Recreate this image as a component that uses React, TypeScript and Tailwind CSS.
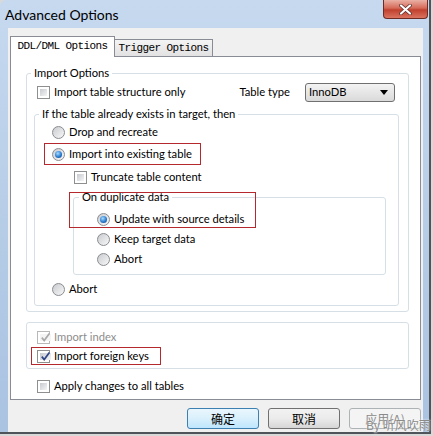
import React from "react";

const label = "font-['Lato','Noto_Sans',sans-serif] text-[11.2px] text-black";

function Radio({ checked }: { checked?: boolean }) {
  return (
    <span className="w-[13px] h-[13px] rounded-full border border-[#8a8c90] bg-[linear-gradient(135deg,#c9cbcf,#f8f8f8)] flex items-center justify-center shrink-0">
      {checked && (
        <span className="w-[7px] h-[7px] rounded-full bg-[radial-gradient(circle_at_40%_35%,#a8dcff,#2a7cd0_55%,#0f3f7a)]" />
      )}
    </span>
  );
}

function Check({ checked, disabled }: { checked?: boolean; disabled?: boolean }) {
  return (
    <span
      className={`w-[13px] h-[13px] border bg-white p-[2px] shrink-0 flex ${
        disabled ? "border-[#b8b8b8]" : "border-[#8e8f8f]"
      }`}
    >
      <span
        className={`flex-1 flex items-center justify-center ${
          disabled ? "bg-[#f4f4f4]" : "bg-[linear-gradient(135deg,#c7cad0,#f5f5f5)]"
        }`}
      >
        {checked && (
          <svg width="11" height="11" viewBox="0 0 11 11" className="shrink-0">
            <path
              d="M1.8 5.6 L4.2 8.6 L9.4 1.6"
              fill="none"
              stroke={disabled ? "#a9a9a9" : "#2f4588"}
              strokeWidth="1.7"
            />
          </svg>
        )}
      </span>
    </span>
  );
}

function Row({ children, className = "" }: { children: React.ReactNode; className?: string }) {
  return <div className={`flex items-center h-[20px] gap-[4px] ${className}`}>{children}</div>;
}

export default function App() {
  return (
    <div className="w-[433px] h-[436px] bg-[#d9d9d9] relative overflow-hidden">
      <div className="w-[431px] h-[434px] border-r-2 border-b-2 border-[#4f545b] bg-[linear-gradient(180deg,#c6d9ef,#b4cbe6_60%,#aac3e1)] flex flex-col rounded-tl-[6px]">
        {/* title bar */}
        <div className="h-[28px] flex items-start justify-between shrink-0">
          <span className="pl-[5px] pt-[5px] font-['Lato','Noto_Sans',sans-serif] text-[14px] leading-[20px] text-black">
            Advanced Options
          </span>
          <div className="mr-[1px] w-[45px] h-[19px] rounded-b-[4px] border border-t-0 border-[#6e2b24] bg-[linear-gradient(180deg,#eab1a6,#d56a58_45%,#c0402e_55%,#d9735f)] flex items-center justify-center">
            <svg width="13" height="11" viewBox="0 0 13 11">
              <path d="M2 1.5 L11 9.5 M11 1.5 L2 9.5" stroke="#5b2a25" strokeWidth="3.6" strokeLinecap="round" />
              <path d="M2 1.5 L11 9.5 M11 1.5 L2 9.5" stroke="#ffffff" strokeWidth="2.2" strokeLinecap="round" />
            </svg>
          </div>
        </div>

        {/* client area */}
        <div className="ml-[8px] mr-[6px] flex-1 bg-[#f0f0f0] pt-[8px] px-[2px] flex flex-col">
          {/* tabs */}
          <div className="relative z-10 h-[21px] -mb-px flex items-start font-['Liberation_Mono',monospace] text-[11px] tracking-[-0.6px] text-black">
            <div className="w-[105px] h-[21px] border border-b-0 border-[#898c95] bg-white flex items-center justify-center pb-[1px]">
              DDL/DML Options
            </div>
            <div className="mt-[3px] w-[98px] h-[17px] border border-l-0 border-b-0 border-[#898c95] bg-[linear-gradient(180deg,#f4f4f4,#e2e2e2)] flex items-center justify-center">
              Trigger Options
            </div>
          </div>

          {/* panel */}
          <div className={`h-[344px] border border-[#898c95] bg-white pt-[9px] ${label}`}>
            <fieldset className="ml-[15px] mr-[11px] border border-[#d5dfe5] rounded-[3px]">
              <legend className="ml-[4px] px-[3px] leading-[14px]">Import Options</legend>
              <Row className="mt-[2px] pl-[10px] pr-[13px]">
                <Check />
                <span>Import table structure only</span>
                <div className="ml-auto flex items-center gap-[15px]">
                  <span>Table type</span>
                  <div className="w-[90px] h-[19px] rounded-[3px] border border-[#707070] bg-[linear-gradient(180deg,#f3f3f3,#e6e6e6_50%,#dadada)] flex items-center justify-between pl-[3px] pr-[6px]">
                    <span>InnoDB</span>
                    <svg width="8" height="5" viewBox="0 0 8 5">
                      <path d="M0 0 H8 L4 5 Z" fill="#000" />
                    </svg>
                  </div>
                </div>
              </Row>

              <fieldset className="mt-[5px] mb-[5px] ml-[7px] mr-[9px] border border-[#d5dfe5] rounded-[3px] pb-[6px]">
                <legend className="ml-[4px] px-[3px] leading-[14px]">
                  If the table already exists in target, then
                </legend>
                <Row className="mt-[1px] pl-[17px]">
                  <Radio />
                  <span>Drop and recreate</span>
                </Row>
                <div className="mt-[1px] ml-[9px] w-[157px] h-[22px] border border-[#b5282d] flex items-center gap-[4px] pl-[7px]">
                  <Radio checked />
                  <span>Import into existing table</span>
                </div>
                <Row className="mt-[2px] pl-[39px]">
                  <Check />
                  <span>Truncate table content</span>
                </Row>

                <div className="relative mt-[3px] ml-[38px] mr-[12px]">
                  <fieldset className="border border-[#d5dfe5] rounded-[3px] pt-[5px] pb-[5px]">
                    <legend className="ml-[5px] px-[3px] leading-[14px]">On duplicate data</legend>
                    <Row className="pl-[23px]">
                      <Radio checked />
                      <span>Update with source details</span>
                    </Row>
                    <Row className="pl-[23px]">
                      <Radio />
                      <span>Keep target data</span>
                    </Row>
                    <Row className="pl-[23px]">
                      <Radio />
                      <span>Abort</span>
                    </Row>
                  </fieldset>
                  <div className="absolute left-[-4px] top-[2px] w-[187px] h-[36px] border border-[#b5282d]" />
                </div>

                <Row className="mt-[4px] pl-[17px]">
                  <Radio />
                  <span>Abort</span>
                </Row>
              </fieldset>
            </fieldset>

            <div className="mt-[10px] ml-[15px] mr-[11px] border border-[#d5dfe5] rounded-[3px] pt-[5px] pb-[3px]">
              <div className="flex items-center h-[18px] gap-[4px] pl-[10px] text-[#8d8d8d]">
                <Check checked disabled />
                <span>Import index</span>
              </div>
              <div className="mt-[1px] ml-[4px] w-[130px] h-[18px] border border-[#b5282d] flex items-center gap-[4px] pl-[5px]">
                <Check checked />
                <span>Import foreign keys</span>
              </div>
            </div>

            <Row className="mt-[7px] pl-[26px]">
              <Check />
              <span>Apply changes to all tables</span>
            </Row>
          </div>

          {/* buttons */}
          <div className="mt-[8px] flex justify-end gap-[9px] font-['Noto_Sans_CJK_SC',sans-serif] text-[12px]">
            <button className="w-[72px] h-[21px] rounded-[3px] border border-[#3c7fb1] bg-[linear-gradient(180deg,#eaf6fd,#d9f0fc_50%,#bee6fd)] text-black leading-none">
              确定
            </button>
            <button className="w-[72px] h-[21px] rounded-[3px] border border-[#707070] bg-[linear-gradient(180deg,#f2f2f2,#ebebeb_50%,#d6d6d6)] text-black leading-none">
              取消
            </button>
            <button className="w-[72px] h-[21px] rounded-[3px] border border-[#adb2b5] bg-[#f4f4f4] text-[#8a8a8a] leading-none">
              应用(A)
            </button>
          </div>
        </div>
      </div>

      <span className="absolute left-[366px] top-[418px] font-['Noto_Sans_CJK_SC',sans-serif] text-[12px] leading-[14px] text-[#8a8a8a] [text-shadow:0_0_2px_#ffffff]">
        By 听风吹雨
      </span>
    </div>
  );
}
